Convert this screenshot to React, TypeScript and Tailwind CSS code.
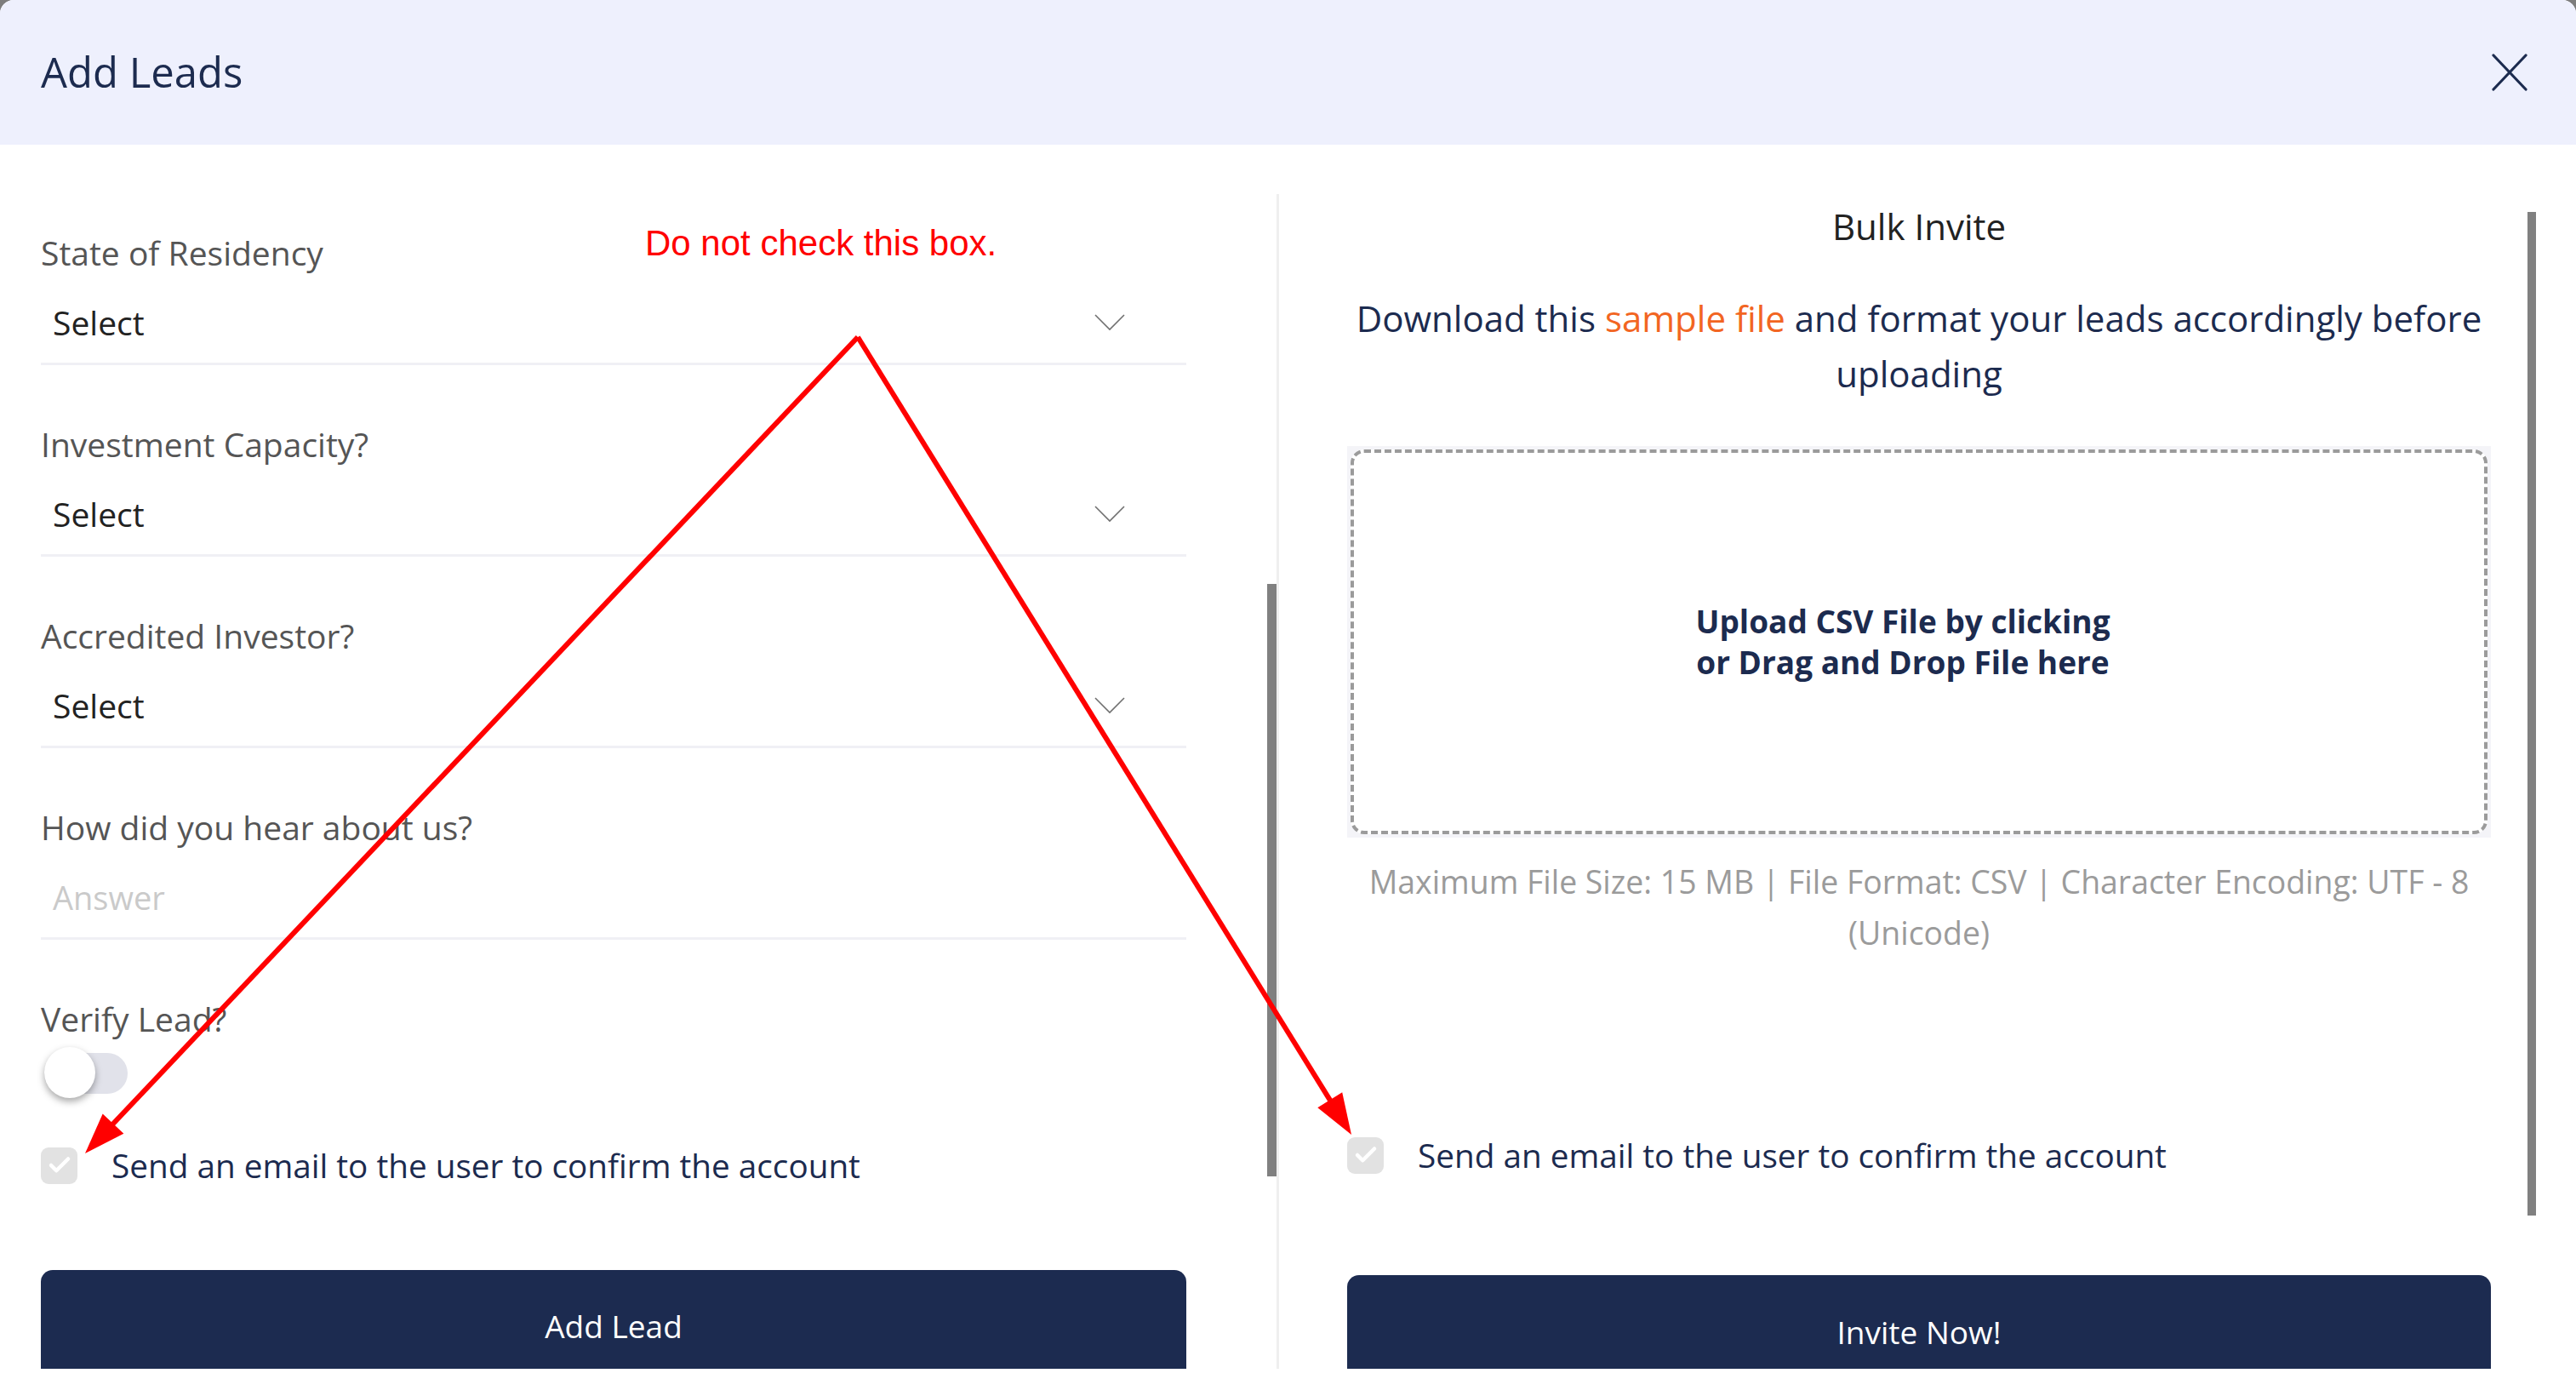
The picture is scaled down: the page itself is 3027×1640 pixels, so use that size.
import { Check } from 'lucide-react';

const FIELDS = ['State of Residency', 'Investment Capacity?', 'Accredited Investor?'];

function Chevron() {
  return (
    <svg width="36" height="20" viewBox="0 0 36 20" fill="none" stroke="#707070" strokeWidth="1.6">
      <polyline points="1,1 18,18 35,1" />
    </svg>
  );
}

function SelectField({ label }: { label: string }) {
  return (
    <div className="mt-[68px] border-b-[3px] border-[#f0f0f5] pb-[22px]">
      <div className="text-[39px] leading-[50px] text-[#555]">{label}</div>
      <div className="mt-[32px] flex h-[50px] items-center justify-between pl-[14px] pr-[72px]">
        <span className="text-[39px] text-[#222]">Select</span>
        <Chevron />
      </div>
    </div>
  );
}

function ConfirmCheck() {
  return (
    <div className="flex items-center gap-[40px]">
      <span className="grid h-[43px] w-[43px] shrink-0 place-items-center rounded-[9px] bg-[#e2e2e2]">
        <Check size={30} strokeWidth={3.6} color="#fff" />
      </span>
      <span className="text-[38.7px] leading-[50px] text-[#1c2b4f]">Send an email to the user to confirm the account</span>
    </div>
  );
}

// arrow from the apex down to a tip, stopped short for the head
function Arrow({ x1, y1, x2, y2 }: { x1: number; y1: number; x2: number; y2: number }) {
  const dx = x2 - x1;
  const dy = y2 - y1;
  const len = Math.hypot(dx, dy);
  const ux = dx / len;
  const uy = dy / len;
  const bx = x2 - ux * 48;
  const by = y2 - uy * 48;
  const px = -uy * 17;
  const py = ux * 17;
  return (
    <>
      <line x1={x1} y1={y1} x2={bx + ux * 4} y2={by + uy * 4} stroke="#ff0000" strokeWidth="6" />
      <polygon points={`${x2},${y2} ${bx + px},${by + py} ${bx - px},${by - py}`} fill="#ff0000" />
    </>
  );
}

export default function App() {
  return (
    <div className="relative h-[1640px] w-[3027px] overflow-hidden bg-[#7d7d7d] font-['Open_Sans',sans-serif]">
      <div className="h-full rounded-t-[16px] bg-white">
        {/* header */}
        <div className="flex h-[170px] items-center justify-between rounded-t-[16px] bg-[#eef0fd] pl-[48px] pr-[57px]">
          <h1 className="text-[49px] font-medium text-[#1c2b4f]">Add Leads</h1>
          <svg width="42" height="44" viewBox="0 0 42 44" fill="none" stroke="#1c2b4f" strokeWidth="3.2" strokeLinecap="round">
            <path d="M2 2L40 42M40 2L2 42" />
          </svg>
        </div>

        <div className="flex h-[1438px] overflow-hidden">
          {/* single invite */}
          <div className="ml-[48px] w-[1346px] shrink-0 pt-[34px]">
            {FIELDS.map(f => <SelectField key={f} label={f} />)}

            <div className="mt-[68px] border-b-[3px] border-[#f0f0f5] pb-[22px]">
              <div className="text-[39px] leading-[50px] text-[#555]">How did you hear about us?</div>
              <div className="mt-[32px] flex h-[50px] items-center pl-[14px] text-[38px] text-[#cacaca]">Answer</div>
            </div>

            <div className="mt-[68px] text-[39px] leading-[50px] text-[#555]">Verify Lead?</div>
            <div className="relative mt-[8px] h-[62px] w-[104px]">
              <div className="absolute left-[4px] top-[7px] h-[48px] w-[98px] rounded-full bg-[#e1e2ea]" />
              <div className="absolute left-[4px] top-0 h-[60px] w-[60px] rounded-full bg-white shadow-[0_4px_9px_rgba(0,0,0,0.35)]" />
            </div>

            <div className="mt-[52px]">
              <ConfirmCheck />
            </div>

            <button className="mt-[98px] flex h-[132px] w-full items-center justify-center rounded-t-[14px] bg-[#1c2b50] text-[37px] text-white">
              Add Lead
            </button>
          </div>

          {/* left scrollbar + divider */}
          <div className="ml-[95px] w-[11px] shrink-0">
            <div className="mt-[516px] h-[696px] bg-[#808080]" />
          </div>
          <div className="mt-[58px] h-[1380px] w-[3px] shrink-0 bg-[#efefef]" />

          {/* bulk invite */}
          <div className="ml-[80px] flex w-[1344px] shrink-0 flex-col items-center text-center">
            <div className="mt-[71px] shrink-0 text-[42px] leading-[50px] text-[#222]">Bulk Invite</div>
            <p className="mt-[50px] shrink-0 text-[42px] leading-[65px] text-[#1c2b4f]">
              Download this <span className="text-[#f26522]">sample file</span> and format your leads accordingly before
              <br />
              uploading
            </p>

            <div className="mt-[53px] h-[460px] w-full shrink-0 bg-[#f4f4f8] p-[4px]">
              <div className="flex h-full items-center justify-center rounded-[16px] border-[4px] border-dashed border-[#9b9b9b] bg-white">
                <p className="mr-[38px] text-[37px] font-bold leading-[48px] text-[#1c2b4f]">
                  Upload CSV File by clicking
                  <br />
                  or Drag and Drop File here
                </p>
              </div>
            </div>

            <p className="mt-[22px] shrink-0 text-[37.4px] leading-[60px] text-[#9b9b9b]">
              Maximum File Size: 15 MB | File Format: CSV | Character Encoding: UTF - 8
              <br />
              (Unicode)
            </p>

            <div className="mt-[206px] shrink-0 self-start">
              <ConfirmCheck />
            </div>

            <button className="mt-[116px] flex h-[134px] w-full shrink-0 items-center justify-center rounded-t-[14px] bg-[#1c2b50] text-[37px] text-white">
              Invite Now!
            </button>
          </div>

          <div className="ml-[43px] w-[10px] shrink-0">
            <div className="mt-[79px] h-[1179px] bg-[#808080]" />
          </div>
        </div>
      </div>

      {/* red annotation drawn over the screenshot */}
      <div className="absolute left-[758px] top-[262px] font-['Liberation_Sans',Arial,sans-serif] text-[42px] leading-[48px] text-[#ff0000]">
        Do not check this box.
      </div>
      <svg className="pointer-events-none absolute left-0 top-0" width="3027" height="1640">
        <Arrow x1={1008} y1={396} x2={100} y2={1355} />
        <Arrow x1={1008} y1={396} x2={1588} y2={1333} />
      </svg>
    </div>
  );
}
